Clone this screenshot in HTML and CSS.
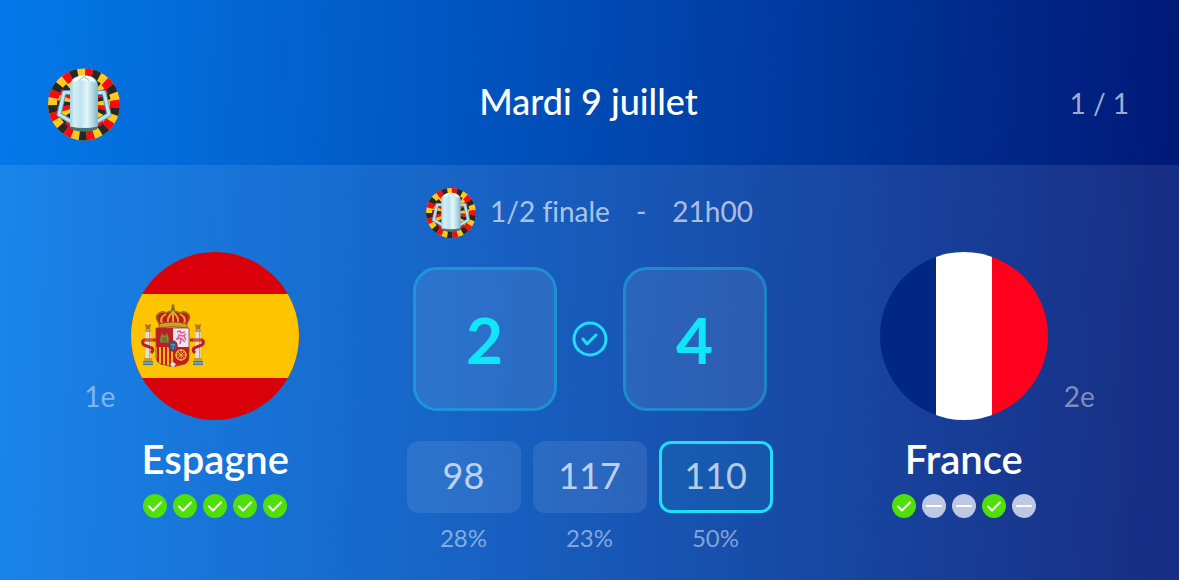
FILE: index.html
```html
<!DOCTYPE html>
<html lang="fr">
<head>
    <meta charset="UTF-8">
    <meta name="viewport" content="width=device-width, initial-scale=1.0">
    <title>Mardi 9 juillet - Pronostics</title>
    <link rel="stylesheet" href="styles.css">
</head>
<body>
    <!-- Icônes partagées -->
    <svg class="sprite" aria-hidden="true">
        <defs>
            <linearGradient id="glass" x1="0" x2="1" y1="0" y2="0">
                <stop offset="0" stop-color="#a5cfe0"/>
                <stop offset="0.15" stop-color="#d3eff5"/>
                <stop offset="0.4" stop-color="#bfe2ee"/>
                <stop offset="0.6" stop-color="#e2f8fb"/>
                <stop offset="0.8" stop-color="#b4dae7"/>
                <stop offset="1" stop-color="#83b4c8"/>
            </linearGradient>
        </defs>
        <symbol id="cup" viewBox="0 0 72 72">
            <circle cx="36" cy="36" r="36" fill="#ffca1c"/>
            <g fill="none" stroke-width="10" transform="rotate(-88 36 36)">
                <circle cx="36" cy="36" r="31" pathLength="27" stroke="#f50b12" stroke-dasharray="1 2"/>
                <circle cx="36" cy="36" r="31" pathLength="27" stroke="#26262b" stroke-dasharray="1 2" stroke-dashoffset="-1"/>
            </g>
            <g fill="none" stroke-width="16" transform="rotate(-78 36 36)">
                <circle cx="36" cy="36" r="19" pathLength="27" stroke="#f50b12" stroke-dasharray="1 2"/>
                <circle cx="36" cy="36" r="19" pathLength="27" stroke="#26262b" stroke-dasharray="1 2" stroke-dashoffset="-1"/>
            </g>
            <g fill="none" stroke-linejoin="round">
                <path d="M23 24h-7l-5 22 12 7M49 24h7l5 22-12 7" stroke="#5e9bb0" stroke-width="5"/>
                <path d="M23 24h-7l-5 22 12 7M49 24h7l5 22-12 7" stroke="#bfe6ef" stroke-width="3"/>
            </g>
            <ellipse cx="36" cy="59" rx="14" ry="4" fill="#3f7677"/>
            <path d="M22 17q1-10 14-10t14 10v41q-14 3-28 0z" fill="url(#glass)"/>
            <path d="M24 14q3-7 12-7t12 7q-12-5-24 0z" fill="#f1fcfd"/>
            <path d="M31 12l5-4 5 4" fill="none" stroke="#8fbccb"/>
        </symbol>
        <symbol id="win" viewBox="0 0 24 24">
            <circle cx="12" cy="12" r="12" fill="#4fe00a"/>
            <path d="M6 12.500l4 4 8-8" fill="none" stroke="#fff" stroke-width="2" stroke-linecap="round" stroke-linejoin="round"/>
        </symbol>
        <symbol id="draw" viewBox="0 0 24 24">
            <circle cx="12" cy="12" r="12" fill="#bdc8e4"/>
            <path d="M5 12h14" stroke="#fff" stroke-width="2" stroke-linecap="round"/>
        </symbol>
        <symbol id="pillar" viewBox="0 0 14 46">
            <path d="M4 1l3 1 3-1-1 5H5z" fill="#a8752b"/>
            <path d="M4 6h6v3H4z" fill="#c99a3d"/>
            <path d="M4.500 9h5v26h-5z" fill="#dce0e3"/>
            <path d="M8.500 9v26" stroke="#a4a8ab"/>
            <path d="M3 35h8v3H3z" fill="#c79b31"/>
            <path d="M2 38h10v5H2z" fill="#477d96"/>
            <path d="M2 40h10M2 42.500h10" stroke="#cfdadb" stroke-width=".7"/>
        </symbol>
    </svg>

    <header class="day-header">
        <svg class="day-logo" role="img" aria-label="Euro 2024"><use href="#cup"/></svg>
        <h1>Mardi 9 juillet</h1>
        <span class="day-count">1 / 1</span>
    </header>

    <main class="match">
        <section class="team home">
            <div class="team-top">
                <span class="rank">1e</span>
                <svg class="flag" viewBox="0 0 168 168" role="img" aria-label="Drapeau de l'Espagne">
                    <clipPath id="round"><circle cx="84" cy="84" r="84"/></clipPath>
                    <g clip-path="url(#round)">
                        <path d="M0 0h168v168H0z" fill="#da000b"/>
                        <path d="M0 42h168v84H0z" fill="#ffc400"/>
                    </g>
                    <!-- Colonnes -->
                    <use href="#pillar" x="10" y="71" width="14" height="46"/>
                    <use href="#pillar" x="60" y="71" width="14" height="46"/>
                    <g fill="none" stroke="#bd2027" stroke-width="3">
                        <path d="M25 88H13q-3 2 0 5l8 3q2 2-1 5"/>
                        <path d="M59 88h12q3 2 0 5l-8 3q-2 2 1 5"/>
                    </g>
                    <path d="M14 88h8M62 88h8" stroke="#e6b23d" stroke-width=".8"/>
                    <!-- Couronne -->
                    <path d="M29 73q-5-7-3-10 5-5 9-2 6-4 14 0 5-3 9 2 2 3-3 10-13-4-26 0z" fill="#c21a21" stroke="#a36c19" stroke-width="1.500"/>
                    <path d="M31 71q-3-5 4-9M53 71q3-5-4-9M37 70q-1-5 5-10 6 5 5 10M42 58v12" fill="none" stroke="#e2a92c" stroke-width="2"/>
                    <path d="M28 72q14-4 28 0v4q-14-3-28 0z" fill="#d89a25" stroke="#875318" stroke-width=".8"/>
                    <circle cx="42" cy="57" r="2" fill="#587f38"/>
                    <path d="M42 52v5M40 54h4" stroke="#8a6420" stroke-width="1.200"/>
                    <!-- Écu -->
                    <path d="M25 76h17v19H25z" fill="#c7182a"/>
                    <path d="M42 76h16v19H42z" fill="#ece7ec"/>
                    <path d="M25 95h17v19q-3 0-8-1-9-1-9-8z" fill="#efbd20"/>
                    <path d="M27 95v15M31 95v18M35 95v18M39 95v19" stroke="#c71a22" stroke-width="2"/>
                    <path d="M42 95h16v10q0 7-8 8-4 1-8 1z" fill="#c7182a"/>
                    <path d="M29 91v-7h1v-3h2v2h3v-2h2v3h1v7z" fill="#a77e26" stroke="#5b5425" stroke-width=".8"/>
                    <path d="M31 86h5M32 91v-3h3v3" stroke="#425d4c" fill="none"/>
                    <path d="M46 80l3-1 1 2 4-1M47 83l5 1 3-2M48 84l-2 3 4-1 4 4M50 87l-1 5M53 84l2 4" fill="none" stroke="#df599e" stroke-width="1.500"/>
                    <circle cx="50" cy="103" r="5" fill="none" stroke="#e5b22b" stroke-width="1.500"/>
                    <path d="M50 97v12M44 103h12M46 99l8 8M54 99l-8 8" stroke="#e5b22b"/>
                    <path d="M25 76h33v29q0 7-8 8l-8 2-8-2q-9-1-9-8z" fill="none" stroke="#8a4c22" stroke-width=".8"/>
                    <path d="M39 112l3-2 3 2-3 4z" fill="#dfe3df"/>
                    <ellipse cx="42" cy="94" rx="4" ry="5" fill="#1865a4" stroke="#a92135" stroke-width="1.500"/>
                    <path d="M40 93h4M42 95v2" stroke="#cdb04b"/>
                </svg>
            </div>
            <h2>Espagne</h2>
            <div class="form" role="img" aria-label="5 victoires">
                <svg><use href="#win"/></svg>
                <svg><use href="#win"/></svg>
                <svg><use href="#win"/></svg>
                <svg><use href="#win"/></svg>
                <svg><use href="#win"/></svg>
            </div>
        </section>

        <section class="center">
            <div class="match-info">
                <svg class="match-logo" aria-hidden="true"><use href="#cup"/></svg>
                <span>1/2 finale</span>
                <span class="dash">-</span>
                <time datetime="2024-07-09T21:00">21h00</time>
            </div>

            <div class="scores">
                <input class="score" type="text" inputmode="numeric" value="2" aria-label="Score Espagne">
                <svg class="saved" viewBox="0 0 36 36" role="img" aria-label="Pronostic enregistré">
                    <circle cx="18" cy="18" r="16" fill="none" stroke="currentColor" stroke-width="3"/>
                    <path d="M11 18l4 5 9-9" fill="none" stroke="currentColor" stroke-width="3" stroke-linecap="round" stroke-linejoin="round"/>
                </svg>
                <input class="score" type="text" inputmode="numeric" value="4" aria-label="Score France">
            </div>

            <div class="odds">
                <div class="odd">
                    <button type="button">98</button>
                    <span>28%</span>
                </div>
                <div class="odd">
                    <button type="button">117</button>
                    <span>23%</span>
                </div>
                <div class="odd">
                    <button type="button" class="selected" aria-pressed="true">110</button>
                    <span>50%</span>
                </div>
            </div>
        </section>

        <section class="team away">
            <div class="team-top">
                <svg class="flag" viewBox="0 0 168 168" role="img" aria-label="Drapeau de la France">
                    <g clip-path="url(#round)">
                        <path d="M0 0h56v168H0z" fill="#002781"/>
                        <path d="M56 0h56v168H56z" fill="#fff"/>
                        <path d="M112 0h56v168h-56z" fill="#ff001d"/>
                    </g>
                </svg>
                <span class="rank">2e</span>
            </div>
            <h2>France</h2>
            <div class="form" role="img" aria-label="2 victoires, 3 nuls">
                <svg><use href="#win"/></svg>
                <svg><use href="#draw"/></svg>
                <svg><use href="#draw"/></svg>
                <svg><use href="#win"/></svg>
                <svg><use href="#draw"/></svg>
            </div>
        </section>
    </main>
</body>
</html>
```
FILE: styles.css
```css
* {
    margin: 0;
    padding: 0;
    box-sizing: border-box;
}

body {
    font-family: Lato, 'Open Sans', sans-serif;
    font-variant-ligatures: none;
    color: white;
    background: linear-gradient(92deg, #0479e9 0%, #0052bd 42%, #001a78 98%);
    min-height: 100vh;
    display: flex;
    flex-direction: column;
}

.sprite {
    position: absolute;
    width: 0;
    height: 0;
}

/* En-tête */
.day-header {
    display: grid;
    grid-template-columns: 1fr auto 1fr;
    align-items: center;
    padding: 68px 50px 24px 48px;
}

.day-logo {
    width: 72px;
    height: 73px;
}

.day-header h1 {
    font-size: 36px;
    font-weight: 500;
    line-height: 40px;
    padding-bottom: 8px;
}

.day-count {
    justify-self: end;
    padding-bottom: 4px;
    font-size: 28px;
    color: rgba(255, 255, 255, 0.65);
}

/* Match */
.match {
    flex: 1;
    display: grid;
    grid-template-columns: 1fr 366px 1fr;
    padding: 24px 24px 28px;
    background: rgba(255, 255, 255, 0.09);
}

.team {
    padding-top: 63px;
    text-align: center;
}

.team-top {
    display: grid;
    grid-template-columns: 1fr 168px 1fr;
    column-gap: 16px;
    align-items: end;
}

.flag {
    display: block;
    grid-column: 2;
    width: 168px;
    height: 168px;
}

.rank {
    font-size: 28px;
    line-height: 36px;
    padding-bottom: 6px;
    color: rgba(255, 255, 255, 0.45);
}

.home .rank {
    text-align: right;
}

.away .rank {
    text-align: left;
}

.team h2 {
    font-size: 40px;
    font-weight: 600;
    line-height: 50px;
    margin: 14px 0 10px;
}

.form {
    display: flex;
    justify-content: center;
    gap: 6px;
}

.form svg {
    width: 24px;
    height: 24px;
}

.center {
    display: flex;
    flex-direction: column;
    gap: 30px;
}

.match-info {
    display: flex;
    align-items: center;
    justify-content: center;
    height: 48px;
    font-size: 28px;
    line-height: 44px;
    color: rgba(255, 255, 255, 0.65);
}

.match-info span,
.match-info time {
    padding-bottom: 4px;
}

.match-logo {
    width: 50px;
    height: 50px;
    margin-right: 14px;
}

.dash {
    margin: 0 26px;
}

.scores {
    display: flex;
    align-items: center;
    justify-content: center;
    gap: 15px;
}

.score {
    width: 144px;
    height: 144px;
    border: 3px solid rgba(40, 220, 245, 0.4);
    border-radius: 24px;
    background: rgba(255, 255, 255, 0.09);
    background-clip: padding-box;
    color: #10e6f8;
    font-family: inherit;
    font-size: 64px;
    font-weight: 700;
    text-align: center;
    outline: none;
}

.score:focus {
    border-color: #22dcf8;
}

.saved {
    width: 36px;
    height: 36px;
    color: #22dcf8;
}

.odds {
    display: grid;
    grid-template-columns: repeat(3, 1fr);
    gap: 12px;
}

.odd {
    text-align: center;
}

.odd button {
    display: block;
    width: 100%;
    height: 72px;
    padding-bottom: 4px;
    border: none;
    border-radius: 12px;
    background: rgba(255, 255, 255, 0.09);
    color: rgba(255, 255, 255, 0.7);
    font-family: inherit;
    font-size: 36px;
    cursor: pointer;
}

.odd button.selected {
    border: 3px solid #22dcf8;
    background: rgba(20, 120, 180, 0.25);
}

.odd span {
    display: block;
    margin-top: 10px;
    font-size: 24px;
    line-height: 30px;
    color: rgba(255, 255, 255, 0.48);
}
```
